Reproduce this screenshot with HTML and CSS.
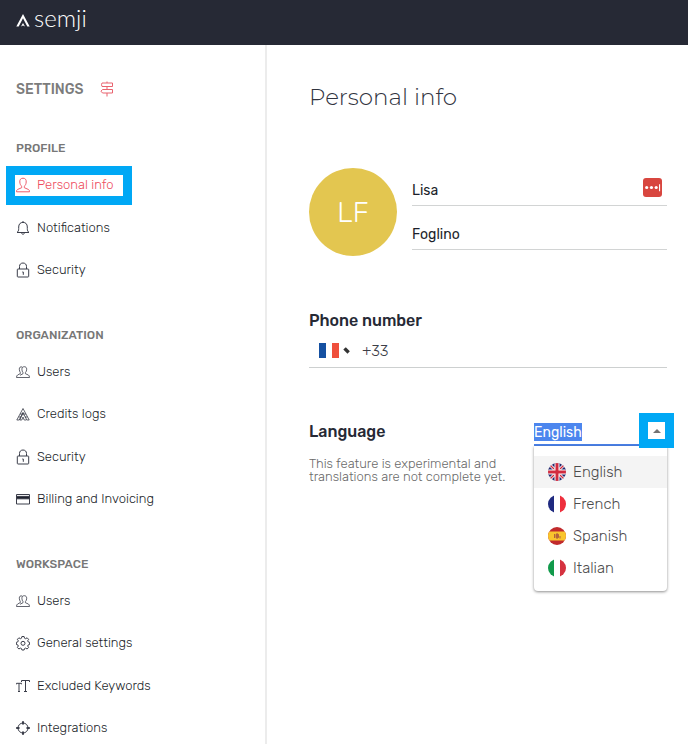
FILE: index.html
```html
<!DOCTYPE html>
<html lang="en">
<head>
<meta charset="utf-8">
<meta name="viewport" content="width=device-width, initial-scale=1">
<title>Semji – Personal info</title>
<link rel="stylesheet" href="styles.css">
</head>
<body>
<svg class="sprite" aria-hidden="true">
  <symbol id="i-user" viewBox="0 0 14 16"><path d="M7 1.2c-2.3 0-3.4 1.5-3.2 3.8.1 2 .9 3.600 1.900 4.300v1.400L1.500 12.500c-.8.5-1 1.200-1 2.300h13c0-1.100-.2-1.800-1-2.300l-4.200-1.800V9.300c1-.7 1.800-2.300 1.900-4.300C10.400 2.700 9.300 1.200 7 1.200Z"/></symbol>
  <symbol id="i-bell" viewBox="0 0 14 16"><path d="M7 1v1.300M1 12.500h12c-1.300-1-1.700-2-1.700-4V7c0-3-1.700-4.600-4.300-4.600S2.700 4 2.700 7v1.500c0 2-.4 3-1.700 4ZM5.500 12.700c.1 2 2.900 2 3 0"/></symbol>
  <symbol id="i-lock" viewBox="0 0 14 16"><path d="M3.500 7V4.500C3.500 2.300 4.900 1 7 1s3.500 1.300 3.500 3.500V7M2 7h10q.7 0 .7.700v6.600q0 .700-.7.700H2q-.7 0-.7-.7V7.700Q1.300 7 2 7ZM6.300 10H7.300V12.800"/></symbol>
  <symbol id="i-users" viewBox="0 0 14 16"><g class="fine"><path d="M4.300 9.600 1.600 11q-1 .5-1.100 2.500h13q-.1-2-1.100-2.500L9.400 9.700V8.600C10.300 7.800 10.700 6.600 10.700 5.200 10.700 3.500 9.700 2.700 8.300 2.700S5.900 3.500 5.900 5.200C5.900 6.600 6.300 7.800 7 8.600v1.100l-3 1.600"/><path d="M6.300 3.100C4.400 2.300 3.200 3.400 3.300 5.200c.1 1.500.4 2.400 1 3.200v1.200"/></g></symbol>
  <symbol id="i-credits" viewBox="0 0 14 16"><path d="M7 2.500.8 14h2.400L7 6.500l3.800 7.500h2.400ZM7 6.500 3.800 14h2L7 11l1.200 3h2M4 8l6 0M2.600 11h2.600M8.800 11h2.600M7 8.500v1" class="fine"/></symbol>
  <symbol id="i-card" viewBox="0 0 14 16"><path d="M.5 3.500h13v9.500H.5Z"/><path class="solid" d="M.5 5.400h13v2.400H.5Z"/></symbol>
  <symbol id="i-gear" viewBox="0 0 14 16"><path d="m5.900 1.500h2.200l.4 1.700 1.100.5 1.500-.9 1.500 1.500-.9 1.500.5 1.100 1.400.4v2.200l-1.400.400-.5 1.100.9 1.500-1.500 1.500-1.500-.9-1.100.5-.4 1.400H5.900l-.4-1.400-1.100-.5-1.500.9-1.500-1.500.9-1.500-.5-1.100-1.400-.4V7.300l1.400-.4.500-1.100-.9-1.500 1.500-1.500 1.500.9 1.100-.5Z"/><circle cx="7" cy="8.300" r="2"/></symbol>
  <symbol id="i-text" viewBox="0 0 14 16"><path d="M5.500 4V2.500h8V4M9.500 2.500V13.500M8 13.500h3M.5 6.300V5.300h5v1M3 5.300v8.200M2 13.500h2"/></symbol>
  <symbol id="i-target" viewBox="0 0 14 16"><circle cx="7" cy="8" r="5"/><path class="heavy" d="M7 1.200v3.300M7 11.500v3.300M.2 8h3.300M10.500 8h3.300"/></symbol>
</svg>

<header class="topbar">
  <a class="brand" href="#">
    <svg class="brand-mark" viewBox="0 0 14 13" aria-hidden="true"><path d="M7 0 .3 12.500h2.400L7 4.300l4.300 8.200h2.400Z"/><path d="m7 9-2 3.500L7 11.500l2 1Z"/></svg>
    <span>semji</span>
  </a>
</header>

<div class="layout">
  <aside class="sidebar">
    <div class="sidebar-title">
      <h1>SETTINGS</h1>
      <svg class="signpost" viewBox="0 0 14 16" aria-hidden="true"><path d="M7 .5v1.500M2 2h10.500v3.500H2L1.500 3.700ZM7 5.500v3M12.500 8.500H2.500L1 10.200 2.500 12H12.500ZM7 12v3.500"/></svg>
    </div>
    <nav aria-label="Settings">
      <section>
        <h2>PROFILE</h2>
        <ul class="menu">
          <li><a class="active" href="#" aria-current="page"><svg><use href="#i-user"/></svg>Personal info</a></li>
          <li><a href="#"><svg><use href="#i-bell"/></svg>Notifications</a></li>
          <li><a href="#"><svg><use href="#i-lock"/></svg>Security</a></li>
        </ul>
      </section>
      <section>
        <h2>ORGANIZATION</h2>
        <ul class="menu menu-long">
          <li><a href="#"><svg><use href="#i-users"/></svg>Users</a></li>
          <li><a href="#"><svg><use href="#i-credits"/></svg>Credits logs</a></li>
          <li><a href="#"><svg><use href="#i-lock"/></svg>Security</a></li>
          <li><a href="#"><svg><use href="#i-card"/></svg>Billing and Invoicing</a></li>
        </ul>
      </section>
      <section>
        <h2>WORKSPACE</h2>
        <ul class="menu menu-long">
          <li><a href="#"><svg><use href="#i-users"/></svg>Users</a></li>
          <li><a href="#"><svg><use href="#i-gear"/></svg>General settings</a></li>
          <li><a href="#"><svg><use href="#i-text"/></svg>Excluded Keywords</a></li>
          <li><a href="#"><svg><use href="#i-target"/></svg>Integrations</a></li>
        </ul>
      </section>
    </nav>
  </aside>

  <main class="content">
    <h2 class="page-title">Personal info</h2>

    <div class="identity">
      <div class="avatar">LF</div>
      <div class="names">
        <div class="field">
          <input type="text" aria-label="First name" value="Lisa">
          <button class="vault" type="button" aria-label="Fill from password manager">
            <svg viewBox="0 0 18 18" aria-hidden="true"><circle cx="3.500" cy="9" r="1.500"/><circle cx="8" cy="9" r="1.500"/><circle cx="12.500" cy="9" r="1.500"/><path d="M15.200 6h1v6.500h-1Z"/></svg>
          </button>
        </div>
        <div class="field">
          <input type="text" aria-label="Last name" value="Foglino">
        </div>
      </div>
    </div>

    <div class="phone">
      <label class="label" for="phone">Phone number</label>
      <div class="phone-row">
        <button class="country" type="button" aria-label="Country: France">
          <svg class="flag" viewBox="0 0 20 15" aria-hidden="true"><path fill="#1550a1" d="M0 0h7v15H0Z"/><path fill="#fff" d="M7 0h6v15H7Z"/><path fill="#ef4f3c" d="M13 0h7v15h-7Z"/></svg>
          <svg class="caret" viewBox="0 0 7 7" aria-hidden="true"><path d="M.3 2.500 2.800.3 6.800 4.300 4.500 6.700Z"/></svg>
        </button>
        <input id="phone" type="tel" value="+33">
      </div>
    </div>

    <div class="language">
      <div class="language-text">
        <label class="label" for="language">Language</label>
        <p>This feature is experimental and translations are not complete yet.</p>
      </div>
      <div class="combo">
        <div class="combo-field">
          <input id="language" type="text" role="combobox" aria-expanded="true" aria-controls="languages" value="English">
        </div>
        <button class="combo-toggle" type="button" aria-label="Close list">
          <svg viewBox="0 0 8 4" aria-hidden="true"><path d="M0 4 4 0l4 4Z"/></svg>
        </button>
        <ul class="options" id="languages" role="listbox">
          <li role="option" aria-selected="true">
            <svg viewBox="0 0 18 18" aria-hidden="true"><clipPath id="round"><circle cx="9" cy="9" r="9"/></clipPath><g clip-path="url(#round)"><path fill="#23296f" d="M0 0h18v18H0Z"/><path stroke="#fff" stroke-width="3" d="m0 0 18 18M18 0 0 18"/><path stroke="#d22b3f" stroke-width="1.300" d="m0 0 18 18M18 0 0 18"/><path stroke="#fff" stroke-width="5" d="M9 0v18M0 9h18"/><path stroke="#d22b3f" stroke-width="3" d="M9 0v18M0 9h18"/></g></svg>English</li>
          <li role="option" aria-selected="false">
            <svg viewBox="0 0 18 18" aria-hidden="true"><g clip-path="url(#round)"><path fill="#fff" d="M0 0h18v18H0Z"/><path fill="#1f2a80" d="M0 0h6v18H0Z"/><path fill="#ee2f3d" d="M12 0h6v18h-6Z"/></g></svg>French</li>
          <li role="option" aria-selected="false">
            <svg viewBox="0 0 18 18" aria-hidden="true"><g clip-path="url(#round)"><path fill="#c12a2c" d="M0 0h18v18H0Z"/><path fill="#f9c52d" d="M0 4.500h18v9H0Z"/><path fill="#b5643a" d="M6 7h1v4H6ZM7.500 7.500 9 6l2 1.500v3L9 12l-1.500-1.500ZM11.500 9h1v2.500h-1Z"/></g></svg>Spanish</li>
          <li role="option" aria-selected="false">
            <svg viewBox="0 0 18 18" aria-hidden="true"><g clip-path="url(#round)"><path fill="#fff" d="M0 0h18v18H0Z"/><path fill="#119a4b" d="M0 0h6v18H0Z"/><path fill="#d5323f" d="M12 0h6v18h-6Z"/></g></svg>Italian</li>
        </ul>
      </div>
    </div>
  </main>
</div>
</body>
</html>
```
FILE: styles.css
```css
*, ::after {
  box-sizing: border-box;
}

body {
  margin: 0;
  min-height: 100vh;
  display: flex;
  flex-direction: column;
  background: #fff;
  color: #1c1f2b;
  font-family: Rubik, Roboto, "Liberation Sans", sans-serif;
  font-size: 13px;
  font-weight: 300;
}

h1, h2, p, ul {
  margin: 0;
  padding: 0;
}

ul {
  list-style: none;
}

a {
  color: inherit;
  text-decoration: none;
}

input, button {
  font: inherit;
  color: inherit;
  border: 0;
  padding: 0;
  margin: 0;
  background: none;
  outline: none;
  min-width: 0;
}

.sprite {
  position: absolute;
  width: 0;
  height: 0;
}

.topbar {
  height: 45px;
  padding: 0 16px;
  background: #262935;
  display: flex;
  align-items: center;
}

.brand {
  display: flex;
  align-items: center;
  gap: 4px;
  padding-bottom: 10px;
  color: #fff;
  font: 300 24px/32px Lato, sans-serif;
}

.brand-mark {
  width: 14px;
  height: 13px;
  margin-top: 6px;
  fill: #fff;
}

.layout {
  flex: 1;
  display: flex;
}

.sidebar {
  width: 267px;
  flex-shrink: 0;
  padding: 32px 16px 0;
  border-right: 2px solid #ececec;
}

.sidebar-title {
  display: flex;
  align-items: center;
  gap: 16px;
  height: 24px;
  margin-bottom: 37px;
}

.sidebar h1 {
  font-size: 14px;
  font-weight: 500;
  color: #7c7c7c;
}

.signpost {
  width: 14px;
  height: 16px;
  fill: none;
  stroke: #e9636f;
}

.sidebar section {
  margin-bottom: 45px;
}

.sidebar h2 {
  font-size: 12px;
  line-height: 20px;
  font-weight: 500;
  color: #777;
  margin-bottom: 17px;
}

.sidebar nav section:last-child {
  margin-bottom: 0;
}

.menu {
  min-height: 105px;
  display: flex;
  flex-direction: column;
  justify-content: space-between;
}

.menu-long {
  min-height: 147px;
}

.menu a {
  position: relative;
  display: flex;
  align-items: center;
  gap: 7px;
  line-height: 20px;
}

.menu svg {
  width: 14px;
  height: 16px;
  fill: none;
  stroke: #3b3e4a;
  stroke-width: 1;
}

.solid {
  fill: #20232f;
}

.heavy {
  stroke-width: 2;
}

.fine {
  stroke-width: 0.8;
}

.menu .active {
  color: #ee4d5e;
}

.menu .active svg {
  stroke: #ee5d6c;
}

.menu .active::after {
  content: "";
  position: absolute;
  left: -10px;
  top: -9px;
  width: 126px;
  height: 39px;
  border: 9px solid #00a8f5;
}

.content {
  flex: 1;
  min-width: 0;
  padding: 32px 21px 32px 42px;
}

.page-title {
  font: 300 23px/40px Montserrat, Inter, sans-serif;
  color: #31343f;
}

.identity {
  display: flex;
  gap: 15px;
  margin-top: 51px;
}

.avatar {
  width: 88px;
  height: 88px;
  flex-shrink: 0;
  border-radius: 50%;
  background: #e3c650;
  color: #fff;
  display: flex;
  align-items: center;
  justify-content: center;
  font-size: 28px;
}

.names {
  flex: 1;
  min-width: 0;
  padding-top: 5px;
  font-size: 14px;
  font-weight: 400;
}

.field {
  display: flex;
  align-items: center;
  height: 33px;
  margin-bottom: 11px;
  padding-top: 2px;
  border-bottom: 1px solid #d2d4d4;
}

.field input {
  flex: 1;
}

.vault {
  width: 19px;
  height: 19px;
  margin: 0 5px 6px 0;
  border-radius: 3px;
  background: #d8463f;
}

.vault svg {
  display: block;
  fill: #fff;
}

.label {
  display: block;
  font-size: 16px;
  line-height: 24px;
  font-weight: 500;
  color: #262935;
}

.phone {
  margin-top: 48px;
}

.phone-row {
  display: flex;
  align-items: center;
  height: 35px;
  padding: 1px 0 0 10px;
  border-bottom: 1px solid #cdd0d0;
  font-size: 15px;
  color: #3d4048;
}

.country {
  display: flex;
  align-items: center;
  gap: 4px;
  margin-right: 12px;
}

.flag {
  width: 20px;
  height: 15px;
}

.caret {
  width: 7px;
  height: 7px;
  fill: #333;
}

.phone-row input {
  flex: 1;
}

.language {
  display: flex;
  justify-content: space-between;
  margin-top: 52px;
}

.language-text {
  width: 200px;
}

.language p {
  margin-top: 13px;
  font-size: 13px;
  line-height: 13px;
  color: #6a6a6a;
}

.combo {
  position: relative;
  width: 133px;
  flex-shrink: 0;
  font-size: 15px;
}

.combo-field {
  height: 26px;
  padding-top: 3px;
  border-bottom: 2px solid #4b82e8;
  font-size: 14px;
  font-weight: 400;
}

.combo input {
  display: block;
  field-sizing: content;
  height: 18px;
  background: #4c86ee;
  color: #fff;
}

.combo-toggle {
  position: absolute;
  z-index: 1;
  top: -7px;
  right: -7px;
  width: 35px;
  height: 35px;
  display: flex;
  align-items: center;
  justify-content: center;
  border: 9px solid #00a8f5;
  background: #fff;
}

.combo-toggle svg {
  width: 8px;
  height: 4px;
  fill: #737373;
}

.options {
  padding: 10px 0 7px;
  border-radius: 0 0 4px 4px;
  box-shadow: 0 1px 3px rgba(0, 0, 0, 0.45);
  color: #4c4c4c;
}

.options li {
  display: flex;
  align-items: center;
  gap: 7px;
  height: 32px;
  padding-left: 14px;
}

.options [aria-selected="true"] {
  background: #f4f4f4;
}

.options svg {
  width: 18px;
  height: 18px;
}
```
